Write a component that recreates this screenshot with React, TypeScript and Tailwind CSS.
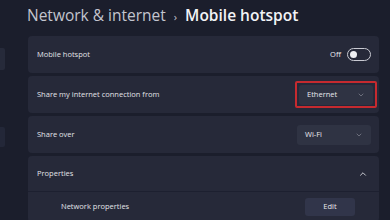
import { ChevronDown, ChevronUp } from "lucide-react";

function Dropdown({ label }: { label: string }) {
  return (
    <div className="flex h-[20px] w-[74px] items-center justify-between rounded-[3px] bg-[#2f3343] pl-[8px] pr-[8px] text-[7.5px] text-[#e8e9ee]">
      <span>{label}</span>
      <ChevronDown size={8} strokeWidth={1.5} className="text-[#a9abb5]" />
    </div>
  );
}

export default function App() {
  return (
    <div
      className="relative h-[220px] w-[390px] overflow-hidden bg-[#1b1e2c]"
      style={{ fontFamily: '"Open Sans", "Noto Sans", sans-serif' }}
    >
      {/* sidebar edges peeking in */}
      <div className="absolute left-0 top-[48px] h-[22px] w-[5px] rounded-r-[2px] bg-[#262a3a]" />
      <div className="absolute left-0 top-[127px] h-[20px] w-[5px] rounded-r-[2px] bg-[#232738]" />

      <div className="pl-[28px] pr-[11px]">
        {/* Breadcrumb */}
        <div className="-ml-[1px] flex h-[32px] items-center whitespace-nowrap text-[15.5px] leading-none">
          <span className="text-[#c3c5cf]">Network &amp; internet</span>
          <span className="mx-[8px] text-[11px] text-[#c3c5cf]">›</span>
          <span className="font-semibold text-[#f2f3f6]">Mobile hotspot</span>
        </div>

        <div className="mt-[4px] flex flex-col gap-[3px] text-[7.5px] text-[#e2e3e8]">
          {/* Mobile hotspot */}
          <div className="flex h-[37px] items-center justify-between rounded-[4px] bg-[#262939] pl-[9px] pr-[8px]">
            <span>Mobile hotspot</span>
            <div className="flex items-center gap-[6px]">
              <span className="font-medium text-[#eeeff3]">Off</span>
              <div className="flex h-[13px] w-[24px] items-center rounded-full border border-[#c9cad2] pl-[2px]">
                <div className="h-[7px] w-[7px] rounded-full bg-[#eeeff3]" />
              </div>
            </div>
          </div>

          {/* Share from */}
          <div className="flex h-[37px] items-center justify-between rounded-[4px] bg-[#262939] pl-[9px] pr-[2px]">
            <span>Share my internet connection from</span>
            <div className="rounded-[2px] border-[2px] border-[#c62a2f] px-[2px] py-[1.5px]">
              <Dropdown label="Ethernet" />
            </div>
          </div>

          {/* Share over */}
          <div className="flex h-[37px] items-center justify-between rounded-[4px] bg-[#262939] pl-[9px] pr-[8px]">
            <span>Share over</span>
            <Dropdown label="Wi-Fi" />
          </div>

          {/* Properties */}
          <div className="rounded-[4px] bg-[#262939]">
            <div className="flex h-[36px] items-center justify-between border-b border-[#1d2030] pl-[9px] pr-[11px]">
              <span>Properties</span>
              <ChevronUp size={10} strokeWidth={2.25} className="text-[#d0d1d8]" />
            </div>
            <div className="flex h-[30px] items-center justify-between pl-[33px] pr-[24px]">
              <span>Network properties</span>
              <div className="flex h-[18px] w-[50px] items-center justify-center rounded-[3px] bg-[#31354a] text-[#e8e9ee]">
                Edit
              </div>
            </div>
          </div>
        </div>
      </div>
    </div>
  );
}
